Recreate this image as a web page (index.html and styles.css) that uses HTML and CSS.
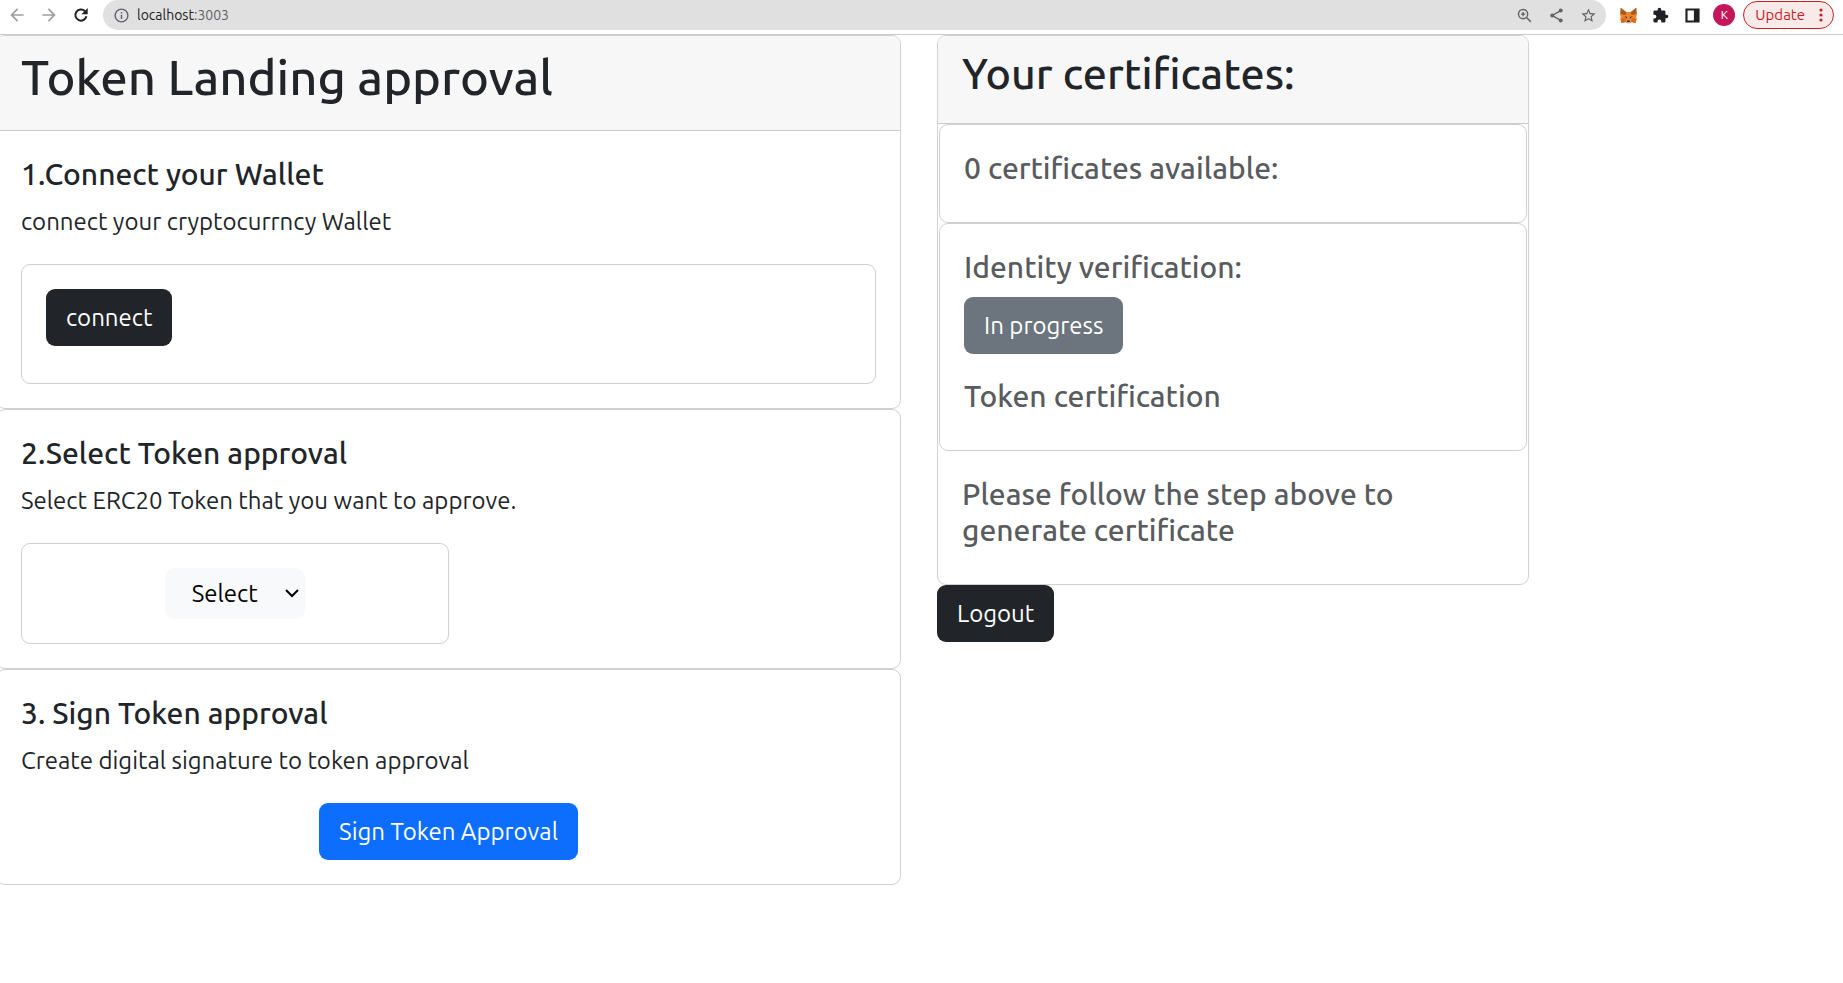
FILE: index.html
```
<!DOCTYPE html>
<html lang="en">
<head>
<meta charset="utf-8">
<meta name="viewport" content="width=device-width, initial-scale=1">
<title>Token Landing approval</title>
<link rel="stylesheet" href="styles.css">
</head>
<body>
<header class="browser-bar">
  <nav class="nav-buttons" aria-label="Navigation">
    <button class="icon-button muted" type="button" aria-label="Back">
      <svg viewBox="0 0 24 24"><path d="M20 11H7.830l5.590-5.590L12 4l-8 8 8 8 1.410-1.410L7.830 13H20z"/></svg>
    </button>
    <button class="icon-button muted" type="button" aria-label="Forward">
      <svg viewBox="0 0 24 24"><path d="M12 4l-1.410 1.410L16.170 11H4v2h12.170l-5.580 5.590L12 20l8-8z"/></svg>
    </button>
    <button class="icon-button dark" type="button" aria-label="Reload">
      <svg viewBox="0 0 24 24"><path d="M18.500 13.500a6.700 6.700 0 1 1-1.800-6.200" fill="none" stroke="currentColor" stroke-width="2.400"/><path d="M20 3.500V11h-7.500z"/></svg>
    </button>
  </nav>
  <div class="address-bar">
    <svg class="glyph" viewBox="0 0 24 24" aria-hidden="true"><path d="M11 7h2v2h-2zm0 4h2v6h-2zm1-9a10 10 0 1 0 0 20 10 10 0 0 0 0-20zm0 18a8 8 0 1 1 0-16 8 8 0 0 1 0 16z"/></svg>
    <span class="address">localhost<span class="port">:3003</span></span>
    <div class="address-tools">
      <button class="icon-button" type="button" aria-label="Zoom">
        <svg viewBox="0 0 24 24"><path d="M14.500 14.500L21 21M10 7v6M7 10h6" fill="none" stroke="currentColor" stroke-width="2"/><circle cx="10" cy="10" r="6.500" fill="none" stroke="currentColor" stroke-width="2"/></svg>
      </button>
      <button class="icon-button" type="button" aria-label="Share">
        <svg viewBox="0 0 24 24"><path d="M18 5L6 12l12 7" fill="none" stroke="currentColor" stroke-width="2"/><circle cx="18" cy="5" r="2.800"/><circle cx="6" cy="12" r="2.800"/><circle cx="18" cy="19" r="2.800"/></svg>
      </button>
      <button class="icon-button" type="button" aria-label="Bookmark">
        <svg viewBox="0 0 24 24"><path d="M22 9.240l-7.190-.62L12 2 9.190 8.630 2 9.240l5.460 4.730L5.820 21 12 17.270 18.180 21l-1.630-7.030zM12 15.400l-3.760 2.270 1-4.280-3.320-2.880 4.380-.38L12 6.100l1.710 4.040 4.380.38-3.320 2.880 1 4.280z"/></svg>
      </button>
    </div>
  </div>
  <div class="extensions">
    <button class="icon-button" type="button" aria-label="MetaMask">
      <svg viewBox="0 0 24 24"><path d="M1 1l8.500 6h5L23 1l1 8.500-1 5 .5 3-1.500 5-5.500-1.500-2 2h-5l-2-2L2 22.500l-1.500-5 .5-3-1-5z" fill="#f0862a"/><path d="M1 1l8 7-1.500 3.500-6.500-1.500zM23 1l-8 7 1.500 3.500 6.500-1.500z" fill="#a05a2c"/><path d="M1 16.500l6-1 1.500 5.500L2 22.500zM23 16.500l-6-1-1.500 5.500 6.500 1.500z" fill="#d96a1c"/><path d="M6 13l4 1v2.500zM18 13l-4 1v2.500z" fill="#233447"/><path d="M9 19.500l1-1h4l1 1-1.500 3h-3z" fill="#c9b8aa"/><path d="M10 19h4l-.5 2h-3z" fill="#161616"/></svg>
    </button>
    <button class="icon-button dark" type="button" aria-label="Extensions">
      <svg viewBox="0 0 24 24"><path d="M20.500 11H19V7a2 2 0 0 0-2-2h-4V3.500a2.500 2.500 0 0 0-5 0V5H4a2 2 0 0 0-1.990 2v3.800H3.500a2.700 2.700 0 0 1 0 5.400H2V20a2 2 0 0 0 2 2h3.800v-1.500a2.700 2.700 0 0 1 5.400 0V22H17a2 2 0 0 0 2-2v-4h1.500a2.500 2.500 0 0 0 0-5z"/></svg>
    </button>
    <button class="icon-button dark" type="button" aria-label="Side panel">
      <svg viewBox="0 0 24 24"><path d="M2 2h20v20H2zM5 5v14h9V5z" fill-rule="evenodd"/></svg>
    </button>
    <button class="avatar" type="button" aria-label="Profile">K</button>
    <button class="update" type="button">Update
      <svg viewBox="0 0 4 16" aria-hidden="true"><circle cx="2" cy="3" r="1.600"/><circle cx="2" cy="8" r="1.600"/><circle cx="2" cy="13" r="1.600"/></svg>
    </button>
  </div>
</header>

<main class="page">
  <div class="steps">
    <section class="card">
      <div class="card-header"><h1 class="title">Token Landing approval</h1></div>
      <div class="card-body">
        <h2 class="heading">1.Connect your Wallet</h2>
        <p class="text">connect your cryptocurrncy Wallet</p>
        <div class="card box box-connect">
          <button class="btn btn-dark" type="button">connect</button>
        </div>
      </div>
    </section>
    <section class="card">
      <div class="card-body">
        <h2 class="heading">2.Select Token approval</h2>
        <p class="text">Select ERC20 Token that you want to approve.</p>
        <div class="card box box-select">
          <div class="select-wrap">
            <select class="token-select" aria-label="Token"><option>Select</option></select>
            <svg class="chevron" viewBox="0 0 14 9" aria-hidden="true"><path d="M1 1l6 6 6-6" fill="none" stroke="currentColor" stroke-width="2"/></svg>
          </div>
        </div>
      </div>
    </section>
    <section class="card">
      <div class="card-body">
        <h2 class="heading">3. Sign Token approval</h2>
        <p class="text">Create digital signature to token approval</p>
        <div class="actions"><button class="btn btn-primary" type="button">Sign Token Approval</button></div>
      </div>
    </section>
  </div>

  <aside class="certificates">
    <section class="card">
      <div class="card-header"><h2 class="subtitle">Your certificates:</h2></div>
      <div class="card inner">
        <div class="card-body"><h3 class="heading faded">0 certificates available:</h3></div>
      </div>
      <div class="card inner">
        <div class="card-body">
          <h3 class="heading faded">Identity verification:</h3>
          <button class="btn btn-secondary" type="button">In progress</button>
          <h3 class="heading faded spaced">Token certification</h3>
        </div>
      </div>
      <div class="card-body"><h3 class="heading faded">Please follow the step above to generate certificate</h3></div>
    </section>
    <button class="btn btn-dark" type="button">Logout</button>
  </aside>
</main>
</body>
</html>
```
FILE: styles.css
```
* {
  box-sizing: border-box;
}

body {
  margin: 0;
  background: #fff;
  color: #212529;
  font: 24px/36px Ubuntu, "Noto Sans", sans-serif;
  overflow-x: hidden;
}

button,
select {
  font: inherit;
  margin: 0;
}

h1,
h2,
h3,
p {
  margin: 0;
}

/* Browser toolbar */
.browser-bar {
  display: flex;
  align-items: flex-start;
  height: 35px;
  padding: 0 9px 0 1px;
  border-bottom: 1px solid #cbcbcb;
  color: #5f6368;
}

.nav-buttons,
.address-tools,
.extensions {
  display: flex;
  align-items: center;
  height: 30px;
}

.nav-buttons {
  padding-right: 6px;
}

.icon-button {
  display: flex;
  align-items: center;
  justify-content: center;
  width: 32px;
  height: 30px;
  padding: 0;
  border: 0;
  background: none;
  color: #5f6368;
}

.icon-button svg,
.glyph {
  width: 17px;
  height: 17px;
  fill: currentColor;
}

.icon-button.muted {
  color: #a0a0a0;
}

.icon-button.dark {
  color: #202124;
}

.icon-button.muted svg,
.nav-buttons .dark svg {
  width: 20px;
  height: 20px;
}

.address-bar {
  display: flex;
  flex: 1;
  align-items: center;
  height: 30px;
  padding: 0 2px 0 10px;
  border-radius: 15px;
  background: #e0e0e0;
  font-size: 14px;
  line-height: 20px;
}

.address {
  flex: 1;
  padding-left: 7px;
  color: #202124;
}

.port {
  color: #5f6368;
}

.extensions {
  padding-left: 6px;
}

.avatar {
  width: 22px;
  height: 22px;
  margin: 0 8px 0 5px;
  padding: 0;
  border: 0;
  border-radius: 50%;
  background: #c2185b;
  color: #fff;
  font-size: 12px;
  line-height: 22px;
}

.update {
  display: flex;
  align-items: center;
  gap: 14px;
  height: 28px;
  padding: 0 10px 0 11px;
  border: 1px solid #c5221f;
  border-radius: 14px;
  background: #f9eaea;
  color: #c5221f;
  font-size: 15px;
  line-height: 20px;
}

.update svg {
  width: 4px;
  height: 16px;
  fill: currentColor;
}

/* Page columns */
.page {
  display: grid;
  grid-template-columns: 905fr 592fr 278fr;
  column-gap: 36px;
  align-items: start;
  margin-left: -4px;
}

/* Cards */
.card {
  border: 1px solid #d0d0d0;
  border-radius: 9px;
  background: #fff;
}

.inner {
  margin: 0 1px;
}

.card-header {
  padding: 12px 24px;
  border-bottom: 1px solid #cbcbcb;
  border-radius: 8px 8px 0 0;
  background: #f7f7f7;
}

.card-body {
  padding: 25px 24px 24px;
}

.title {
  margin-bottom: 12px;
  font-size: 49px;
  font-weight: 500;
  line-height: 58px;
}

.subtitle {
  margin-bottom: 12px;
  font-size: 43px;
  font-weight: 500;
  line-height: 51px;
}

.heading {
  margin-bottom: 12px;
  font-size: 30px;
  font-weight: 500;
  line-height: 36px;
}

.faded {
  color: #595c5f;
}

.spaced {
  margin-top: 24px;
}

.text {
  margin-bottom: 24px;
}

.box {
  padding: 24px;
}

.box-connect {
  padding-bottom: 37px;
}

.box-select {
  display: flex;
  justify-content: center;
  width: 50%;
}

.actions {
  display: flex;
  justify-content: center;
}

/* Controls */
.btn {
  display: block;
  height: 57px;
  padding: 0 20px;
  border: 0;
  border-radius: 9px;
  color: #fff;
}

.btn-dark {
  background: #212529;
}

.btn-primary {
  background: #0d6efd;
}

.btn-secondary {
  background: #6c757d;
}

.select-wrap {
  display: grid;
  align-items: center;
}

.select-wrap > * {
  grid-area: 1 / 1;
}

.token-select {
  width: 140px;
  height: 51px;
  padding: 0 0 0 27px;
  border: 0;
  border-radius: 9px;
  background: #f8f9fa;
  color: #000;
  appearance: none;
}

.chevron {
  justify-self: end;
  width: 14px;
  height: 9px;
  margin-right: 6px;
  color: #000;
  pointer-events: none;
}
```
